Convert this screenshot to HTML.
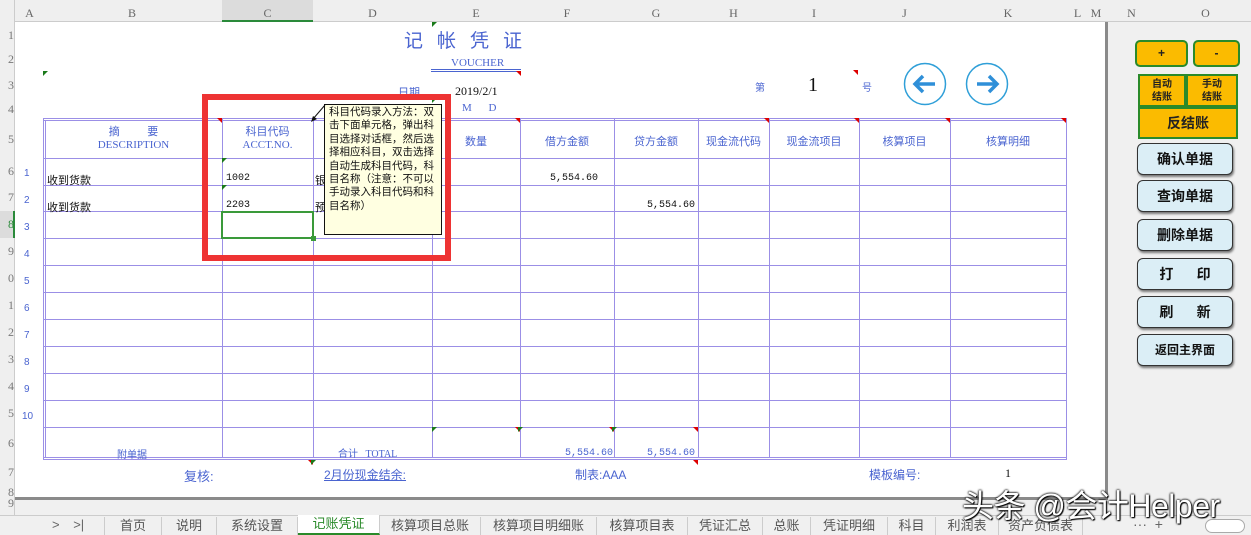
<!DOCTYPE html>
<html><head><meta charset="utf-8"><style>
*{margin:0;padding:0;box-sizing:border-box}
body{width:1251px;height:535px;overflow:hidden;background:#fff;position:relative;font-family:"Liberation Serif","Noto Serif CJK SC",serif;}
.a{position:absolute}
.hl{position:absolute;height:1px;background:#9b8fe6}
.vl{position:absolute;width:1px;background:#9b8fe6}
.ch{position:absolute;top:6px;height:16px;font-size:12px;color:#666;text-align:center;font-family:"Liberation Serif",serif}
.cs{font-family:"Liberation Sans","Noto Sans CJK SC",sans-serif}
.bl{color:#4a64d0}
.rn{position:absolute;left:0;width:14px;font-size:12px;color:#777;text-align:right;overflow:hidden;font-family:"Liberation Serif",serif}
.num{position:absolute;left:24px;font-size:10px;color:#4a64d0;font-family:"Liberation Sans",sans-serif}
.gt{position:absolute;width:0;height:0;border-top:5px solid #1a7a1a;border-right:5px solid transparent}
.rt{position:absolute;width:0;height:0;border-top:5px solid #d00;border-left:5px solid transparent}
.btn{position:absolute;left:1137px;width:96px;height:32px;background:#dbeef6;border:1px solid #333;border-radius:6px;box-shadow:1px 2px 2px #777;font-family:"Liberation Sans","Noto Sans CJK SC",sans-serif;font-weight:bold;font-size:14px;text-align:center;line-height:30px;color:#111}
.yb{position:absolute;background:#fbbb00;border:2px solid #2a8a2a;font-family:"Liberation Sans","Noto Sans CJK SC",sans-serif;font-weight:bold;text-align:center;color:#222}
.tab{position:absolute;top:517px;height:18px;font-size:13px;color:#555;text-align:center;line-height:18px;font-family:"Liberation Sans","Noto Sans CJK SC",sans-serif;border-right:1px solid #ccc}
.mono{font-family:"Liberation Mono","Noto Sans CJK SC",monospace;font-size:10px;color:#4a64d0}
</style></head><body>
<div class="a" style="left:0;top:0;width:1251px;height:22px;background:#efefef;border-bottom:1px solid #ccc"></div>
<div class="a" style="left:0;top:0;width:15px;height:535px;background:#efefef;border-right:1px solid #ccc"></div>
<div class="a" style="left:222px;top:0;width:91px;height:22px;background:#dcdcdc;border-bottom:2px solid #2a8a3a"></div>
<div class="a" style="left:0;top:211px;width:15px;height:27px;background:#dcdcdc;border-right:2px solid #2a8a3a"></div>
<div class="ch" style="left:17px;width:25px">A</div>
<div class="ch" style="left:42px;width:180px">B</div>
<div class="ch" style="left:222px;width:91px">C</div>
<div class="ch" style="left:313px;width:119px">D</div>
<div class="ch" style="left:432px;width:88px">E</div>
<div class="ch" style="left:520px;width:94px">F</div>
<div class="ch" style="left:614px;width:84px">G</div>
<div class="ch" style="left:698px;width:71px">H</div>
<div class="ch" style="left:769px;width:90px">I</div>
<div class="ch" style="left:859px;width:91px">J</div>
<div class="ch" style="left:950px;width:116px">K</div>
<div class="ch" style="left:1066px;width:23px">L</div>
<div class="ch" style="left:1089px;width:14px">M</div>
<div class="ch" style="left:1103px;width:57px">N</div>
<div class="ch" style="left:1160px;width:91px">O</div>
<div class="rn" style="top:28px">1</div><div class="rn" style="top:52px">2</div><div class="rn" style="top:78px">3</div><div class="rn" style="top:102px">4</div><div class="rn" style="top:132px">5</div><div class="rn" style="top:164px">6</div><div class="rn" style="top:190px">7</div><div class="rn" style="top:217px;color:#2a8a3a">8</div><div class="rn" style="top:244px">9</div><div class="rn" style="top:271px">0</div><div class="rn" style="top:298px">1</div><div class="rn" style="top:325px">2</div><div class="rn" style="top:352px">3</div><div class="rn" style="top:379px">4</div><div class="rn" style="top:406px">5</div><div class="rn" style="top:436px">6</div><div class="rn" style="top:465px">7</div><div class="rn" style="top:485px">8</div><div class="rn" style="top:496px">9</div>
<div class="a" style="left:1105px;top:22px;width:146px;height:493px;background:#f0f0f0;border-left:3px solid #8a8a8a"></div>
<div class="a" style="left:15px;top:497px;width:1093px;height:3px;background:#8a8a8a"></div>
<div class="a" style="left:15px;top:500px;width:1093px;height:15px;background:#f0f0f0"></div>
<div class="a bl cs" style="left:404px;top:26px;font-size:19px;letter-spacing:14px">记帐凭证</div>
<div class="a bl" style="left:451px;top:57px;font-size:11px">VOUCHER</div>
<div class="a" style="left:431px;top:69px;width:90px;height:1px;background:#4a64d0"></div>
<div class="a" style="left:431px;top:71px;width:90px;height:1px;background:#4a64d0"></div>
<div class="a bl cs" style="left:398px;top:84px;font-size:11px">日期</div>
<div class="a" style="left:455px;top:84px;font-size:12px;color:#111">2019/2/1</div>
<div class="a bl" style="left:462px;top:102px;font-size:11px;word-spacing:14px">M D</div>
<div class="a bl cs" style="left:755px;top:79px;font-size:10px">第</div>
<div class="a" style="left:808px;top:74px;font-size:20px;color:#111">1</div>
<div class="a bl cs" style="left:862px;top:79px;font-size:10px">号</div>
<svg class="a" style="left:903px;top:62px" width="44" height="44"><circle cx="22" cy="22" r="20.5" fill="#fff" stroke="#2f9fd8" stroke-width="1.5"/><path d="M32 22H12M20 14l-8 8 8 8" fill="none" stroke="#2f8fd8" stroke-width="3.5"/></svg>
<svg class="a" style="left:965px;top:62px" width="44" height="44"><circle cx="22" cy="22" r="20.5" fill="#fff" stroke="#2f9fd8" stroke-width="1.5"/><path d="M12 22H32M24 14l8 8-8 8" fill="none" stroke="#2f8fd8" stroke-width="3.5"/></svg>
<div class="hl" style="left:43px;top:118px;width:1024px"></div>
<div class="hl" style="left:43px;top:120px;width:1024px"></div>
<div class="hl" style="left:43px;top:158px;width:1024px"></div>
<div class="hl" style="left:43px;top:185px;width:1024px"></div>
<div class="hl" style="left:43px;top:211px;width:1024px"></div>
<div class="hl" style="left:43px;top:238px;width:1024px"></div>
<div class="hl" style="left:43px;top:265px;width:1024px"></div>
<div class="hl" style="left:43px;top:292px;width:1024px"></div>
<div class="hl" style="left:43px;top:319px;width:1024px"></div>
<div class="hl" style="left:43px;top:346px;width:1024px"></div>
<div class="hl" style="left:43px;top:373px;width:1024px"></div>
<div class="hl" style="left:43px;top:400px;width:1024px"></div>
<div class="hl" style="left:43px;top:427px;width:1024px"></div>
<div class="hl" style="left:43px;top:457px;width:1024px"></div>
<div class="hl" style="left:43px;top:459px;width:1024px"></div>
<div class="vl" style="left:43px;top:118px;height:342px"></div>
<div class="vl" style="left:45px;top:120px;height:338px"></div>
<div class="vl" style="left:222px;top:118px;height:340px"></div>
<div class="vl" style="left:313px;top:118px;height:340px"></div>
<div class="vl" style="left:432px;top:118px;height:340px"></div>
<div class="vl" style="left:520px;top:118px;height:340px"></div>
<div class="vl" style="left:614px;top:118px;height:340px"></div>
<div class="vl" style="left:698px;top:118px;height:340px"></div>
<div class="vl" style="left:769px;top:118px;height:340px"></div>
<div class="vl" style="left:859px;top:118px;height:340px"></div>
<div class="vl" style="left:950px;top:118px;height:340px"></div>
<div class="vl" style="left:1066px;top:118px;height:342px"></div>
<div class="a bl" style="left:45px;top:126px;width:177px;text-align:center;font-size:11px;line-height:13px"><span class="cs">摘&nbsp;&nbsp;&nbsp;&nbsp;&nbsp;&nbsp;&nbsp;&nbsp;&nbsp;要</span><br>DESCRIPTION</div>
<div class="a bl" style="left:222px;top:126px;width:91px;text-align:center;font-size:11px;line-height:13px"><span class="cs">科目代码</span><br>ACCT.NO.</div>
<div class="a bl cs" style="left:432px;top:133px;width:88px;text-align:center;font-size:11px">数量</div>
<div class="a bl cs" style="left:520px;top:133px;width:94px;text-align:center;font-size:11px">借方金额</div>
<div class="a bl cs" style="left:614px;top:133px;width:84px;text-align:center;font-size:11px">贷方金额</div>
<div class="a bl cs" style="left:698px;top:133px;width:71px;text-align:center;font-size:11px">现金流代码</div>
<div class="a bl cs" style="left:769px;top:133px;width:90px;text-align:center;font-size:11px">现金流项目</div>
<div class="a bl cs" style="left:859px;top:133px;width:91px;text-align:center;font-size:11px">核算项目</div>
<div class="a bl cs" style="left:950px;top:133px;width:116px;text-align:center;font-size:11px">核算明细</div>
<div class="num" style="top:168px">1</div><div class="num" style="top:195px">2</div><div class="num" style="top:222px">3</div><div class="num" style="top:249px">4</div><div class="num" style="top:276px">5</div><div class="num" style="top:303px">6</div><div class="num" style="top:330px">7</div><div class="num" style="top:357px">8</div><div class="num" style="top:384px">9</div><div class="num" style="top:411px;left:22px">10</div>
<div class="a cs" style="left:47px;top:172px;font-size:11px;color:#111">收到货款</div>
<div class="a cs" style="left:47px;top:199px;font-size:11px;color:#111">收到货款</div>
<div class="a" style="left:226px;top:173px;font-size:10px;color:#111;font-family:'Liberation Mono',monospace">1002</div>
<div class="a" style="left:226px;top:200px;font-size:10px;color:#111;font-family:'Liberation Mono',monospace">2203</div>
<div class="a cs" style="left:315px;top:172px;font-size:11px;color:#111">银</div>
<div class="a cs" style="left:315px;top:199px;font-size:11px;color:#111">预</div>
<div class="a" style="left:550px;top:173px;font-size:10px;color:#111;font-family:'Liberation Mono',monospace">5,554.60</div>
<div class="a" style="left:647px;top:200px;font-size:10px;color:#111;font-family:'Liberation Mono',monospace">5,554.60</div>
<div class="a bl cs" style="left:117px;top:446px;font-size:10px">附单据</div>
<div class="a bl" style="left:338px;top:445px;font-size:10px"><span class="cs">合计</span>&nbsp;&nbsp;&nbsp;TOTAL</div>
<div class="a mono" style="left:565px;top:448px">5,554.60</div>
<div class="a mono" style="left:647px;top:448px">5,554.60</div>
<div class="a bl cs" style="left:184px;top:466px;font-size:13px">复核:</div>
<div class="a bl cs" style="left:324px;top:466px;font-size:12px;text-decoration:underline">2月份现金结余:</div>
<div class="a bl cs" style="left:575px;top:466px;font-size:12px">制表:AAA</div>
<div class="a bl cs" style="left:869px;top:466px;font-size:12px">模板编号:</div>
<div class="a" style="left:1005px;top:466px;font-size:12px;color:#111">1</div>
<div class="gt" style="left:432px;top:22px"></div><div class="gt" style="left:43px;top:71px"></div><div class="gt" style="left:432px;top:98px"></div>
<div class="gt" style="left:222px;top:158px"></div><div class="gt" style="left:222px;top:185px"></div>
<div class="rt" style="left:217px;top:118px"></div><div class="rt" style="left:515px;top:118px"></div><div class="rt" style="left:764px;top:118px"></div><div class="rt" style="left:854px;top:118px"></div><div class="rt" style="left:945px;top:118px"></div><div class="rt" style="left:1061px;top:118px"></div><div class="rt" style="left:516px;top:71px"></div><div class="rt" style="left:853px;top:70px"></div>
<div class="gt" style="left:432px;top:427px"></div><div class="rt" style="left:515px;top:427px"></div><div class="gt" style="left:518px;top:427px"></div><div class="rt" style="left:609px;top:427px"></div><div class="gt" style="left:612px;top:427px"></div><div class="rt" style="left:693px;top:427px"></div><div class="rt" style="left:308px;top:460px"></div><div class="gt" style="left:311px;top:460px"></div><div class="rt" style="left:693px;top:460px"></div>
<div class="a" style="left:221px;top:211px;width:93px;height:28px;border:2px solid #3a9a3a"></div>
<div class="a" style="left:311px;top:236px;width:5px;height:5px;background:#3a9a3a"></div>
<div class="a cs" style="left:324px;top:104px;width:118px;height:131px;background:#ffffe1;border:1px solid #111;font-size:10.5px;line-height:13.4px;padding:1px 4px;color:#111;word-break:break-all">科目代码录入方法：双击下面单元格，弹出科目选择对话框，然后选择相应科目，双击选择自动生成科目代码，科目名称（注意：不可以手动录入科目代码和科目名称）</div>
<svg class="a" style="left:310px;top:103px" width="18" height="20"><path d="M15 2L3 16" stroke="#111" stroke-width="1"/><path d="M1 19l2-6 4 3z" fill="#111"/></svg>
<div class="a" style="left:202px;top:94px;width:249px;height:167px;border:6px solid #ee3333"></div>
<div class="yb" style="left:1135px;top:40px;width:53px;height:27px;border-radius:5px;line-height:23px;font-size:12px">+</div>
<div class="yb" style="left:1193px;top:40px;width:47px;height:27px;border-radius:5px;line-height:23px;font-size:12px">-</div>
<div class="yb" style="left:1138px;top:74px;width:48px;height:33px;font-size:10px;line-height:13px;padding-top:2px">自动<br>结账</div>
<div class="yb" style="left:1186px;top:74px;width:52px;height:33px;font-size:10px;line-height:13px;padding-top:2px">手动<br>结账</div>
<div class="yb" style="left:1138px;top:107px;width:100px;height:32px;font-size:14px;line-height:28px">反结账</div>
<div class="btn" style="top:143px">确认单据</div>
<div class="btn" style="top:180px">查询单据</div>
<div class="btn" style="top:219px">删除单据</div>
<div class="btn" style="top:258px">打&nbsp;&nbsp;&nbsp;&nbsp;&nbsp;&nbsp;印</div>
<div class="btn" style="top:296px">刷&nbsp;&nbsp;&nbsp;&nbsp;&nbsp;&nbsp;新</div>
<div class="btn" style="top:334px;font-size:12px">返回主界面</div>
<div class="a" style="left:0;top:515px;width:1251px;height:20px;background:#f0f0f0;border-top:1px solid #ccc"></div>
<div class="a" style="left:52px;top:517px;font-size:13px;color:#666;font-family:'Liberation Sans',sans-serif;word-spacing:10px">&gt; &gt;|</div>
<div class="tab" style="left:104px;width:58px;border-left:1px solid #ccc">首页</div>
<div class="tab" style="left:162px;width:55px">说明</div>
<div class="tab" style="left:217px;width:81px">系统设置</div>
<div class="tab" style="left:298px;width:82px;background:#fff;color:#2a8a2a;top:515px;height:20px;border-bottom:2px solid #2a8a2a">记账凭证</div>
<div class="tab" style="left:380px;width:101px">核算项目总账</div>
<div class="tab" style="left:481px;width:116px">核算项目明细账</div>
<div class="tab" style="left:597px;width:91px">核算项目表</div>
<div class="tab" style="left:688px;width:75px">凭证汇总</div>
<div class="tab" style="left:763px;width:48px">总账</div>
<div class="tab" style="left:811px;width:77px">凭证明细</div>
<div class="tab" style="left:888px;width:48px">科目</div>
<div class="tab" style="left:936px;width:63px">利润表</div>
<div class="tab" style="left:999px;width:84px">资产负债表</div>
<div class="a" style="left:1133px;top:516px;font-size:14px;color:#666;font-family:'Liberation Sans',sans-serif">··· &nbsp;+</div>
<div class="a" style="left:1205px;top:519px;width:40px;height:14px;border:1px solid #aaa;border-radius:7px;background:#fff"></div>
<div class="a" style="left:962px;top:481px;font-size:32px;letter-spacing:-0.5px;color:#fff;font-family:'Liberation Sans','Noto Sans CJK SC',sans-serif;text-shadow:0 0 2px #000,0 0 2px #000,1px 1px 1px #000;">头条 @会计Helper</div>
</body></html>
